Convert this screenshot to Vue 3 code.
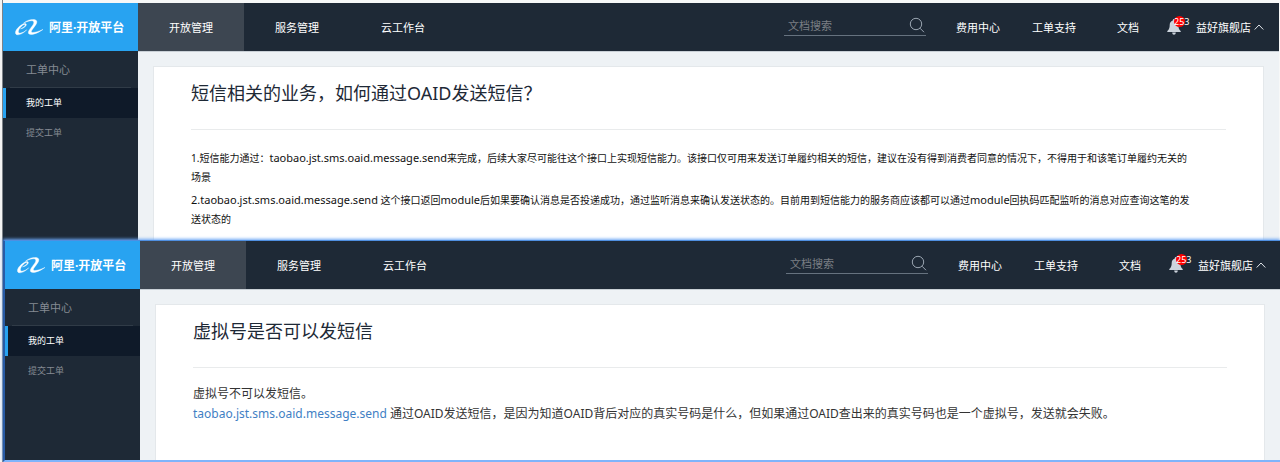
<script setup>
import { ref } from 'vue'

const tabs = ['开放管理', '服务管理', '云工作台']
const links = ['费用中心', '工单支持', '文档']
const menu = ['我的工单', '提交工单']
const queries = ref(['', ''])

const panes = [
  {
    id: 'back',
    title: '短信相关的业务，如何通过OAID发送短信？',
    kind: 'compact',
    paragraphs: [
      [
        { text: '1.短信能力通过：' },
        { text: 'taobao.jst.sms.oaid.message.send', type: 'api' },
        { text: '来完成，后续大家尽可能往这个接口上实现短信能力。该接口仅可用来发送订单履约相关的短信，建议在没有得到消费者同意的情况下，不得用于和该笔订单履约无关的' },
        { type: 'break' },
        { text: '场景' },
      ],
      [
        { text: '2.taobao.jst.sms.oaid.message.send', type: 'api' },
        { text: ' 这个接口返回' },
        { text: 'module', type: 'api' },
        { text: '后如果要确认消息是否投递成功，通过监听消息来确认发送状态的。目前用到短信能力的服务商应该都可以通过' },
        { text: 'module', type: 'api' },
        { text: '回执码匹配监听的消息对应查询这笔的发' },
        { type: 'break' },
        { text: '送状态的' },
      ],
    ],
  },
  {
    id: 'front',
    title: '虚拟号是否可以发短信',
    kind: 'regular',
    paragraphs: [
      [{ text: '虚拟号不可以发短信。' }],
      [
        { text: 'taobao.jst.sms.oaid.message.send', type: 'link' },
        { text: ' 通过OAID发送短信，是因为知道OAID背后对应的真实号码是什么，但如果通过OAID查出来的真实号码也是一个虚拟号，发送就会失败。' },
      ],
    ],
  },
]
</script>

<template>
  <div class="desk">
    <section v-for="(pane, index) in panes" :key="pane.id" class="pane" :class="pane.id">
      <header class="top">
        <a class="brand" href="#">
          <svg class="mark" viewBox="0 0 28 17" aria-hidden="true">
            <path d="M5.500 9.800C8.800 9.400 11.600 7 11.300 5.300 10.800 3.600 7.300 4.800 4.500 7.300 1.200 10.200-.6 13.600 1 15.200 3 17 8.600 14.400 11.700 10.800 8.700 13.600 4.600 15 3.600 13.600 2.700 12.200 4.400 8.800 7.700 6.300 9.200 5.200 10.300 5.100 10.300 5.900 10.300 7 7.700 9 5.500 9.800Z" />
            <path d="M8.500 4.200C12.500.6 19.500-.9 21.500 1.700 23.400 4.700 16.600 9.900 16.300 12.700 16.200 14.400 22.500 13.200 28 10.400 22.500 14.700 14 17.200 13.400 14 12.800 10.800 19.400 6 18.800 3 18.200.8 13 1.700 8.500 4.200Z" />
          </svg>
          <span>阿里·开放平台</span>
        </a>
        <nav class="tabs">
          <a v-for="(tab, n) in tabs" :key="tab" href="#" :class="{ on: n === 0 }">{{ tab }}</a>
        </nav>
        <form class="search" @submit.prevent>
          <input v-model="queries[index]" type="text" placeholder="文档搜索" aria-label="文档搜索" />
          <button type="submit" aria-label="搜索">
            <svg viewBox="0 0 16 16" aria-hidden="true">
              <circle cx="7" cy="7" r="5.700" />
              <path d="M11 11.200 15 15.200" />
            </svg>
          </button>
        </form>
        <nav class="links">
          <a v-for="link in links" :key="link" href="#">{{ link }}</a>
        </nav>
        <button class="bell" type="button" aria-label="消息 253">
          <svg viewBox="0 0 14 16" aria-hidden="true">
            <path d="M7 0C6.200 0 5.800.6 5.800 1.400 3.700 2 2.700 3.800 2.700 6 2.700 9 2 10.600.3 12V13H13.700V12C12 10.600 11.300 9 11.300 6 11.300 3.800 10.300 2 8.200 1.400 8.200.6 7.800 0 7 0ZM5.200 13.600C5.300 15 6 15.800 7 15.800S8.700 15 8.800 13.600Z" />
          </svg>
          <span class="count">253</span>
        </button>
        <button class="account" type="button">
          <span>益好旗舰店</span>
          <svg viewBox="0 0 10 6" aria-hidden="true"><path d="M.7 5.500 5 1 9.300 5.500" /></svg>
        </button>
      </header>
      <div class="body">
        <aside class="side">
          <h2>工单中心</h2>
          <a v-for="(item, n) in menu" :key="item" href="#" :class="{ on: n === 0 }">{{ item }}</a>
        </aside>
        <main class="content">
          <article class="card">
            <h1>{{ pane.title }}</h1>
            <div class="text" :class="pane.kind">
              <p v-for="(paragraph, p) in pane.paragraphs" :key="p">
                <template v-for="(part, k) in paragraph" :key="k">
                  <br v-if="part.type === 'break'" />
                  <a v-else-if="part.type === 'link'" href="#">{{ part.text }}</a>
                  <span v-else :class="part.type">{{ part.text }}</span>
                </template>
              </p>
            </div>
          </article>
        </main>
      </div>
    </section>
  </div>
</template>

<style>
body {
  margin: 0;
  background: #f7f8f8;
}
</style>

<style scoped>
.desk {
  display: flex;
  flex-direction: column;
  min-height: 100vh;
  padding: 3px 0 0 3px;
  box-sizing: border-box;
  font-family: "Noto Sans", "Noto Sans CJK SC", sans-serif;
  font-size: 11px;
  background: linear-gradient(to right, #f4f4f4 2px, #7d8288 2px, #7d8288 3px, #f7f8f8 3px);
}
a {
  color: inherit;
  text-decoration: none;
}
button {
  padding: 0;
  border: 0;
  background: none;
  color: inherit;
  font: inherit;
}
svg {
  display: block;
}
.pane {
  display: flex;
  flex-direction: column;
}
.back {
  margin-right: 1px;
}
.front {
  position: relative;
  flex: 1;
  border-left: 2px solid #285ba6;
  border-top: 1px solid #4f8fe0;
  border-bottom: 2px solid #7fb4fb;
  box-shadow: 0 -1px 3px #6aa5f5;
}
.top {
  display: flex;
  align-items: center;
  height: 48px;
  background: #1e2936;
  color: #fff;
  white-space: nowrap;
}
.brand {
  display: flex;
  align-items: center;
  gap: 6px;
  width: 135px;
  height: 100%;
  padding-left: 12px;
  box-sizing: border-box;
  background: #28a3f1;
  font-size: 12px;
  font-weight: 700;
}
.mark {
  width: 28px;
  height: 17px;
  fill: #fff;
  stroke: #fff;
  stroke-width: 0.4;
}
.tabs {
  display: flex;
  height: 100%;
  margin-right: auto;
}
.tabs a {
  display: grid;
  place-items: center;
  width: 106px;
}
.tabs .on {
  background: #3d4651;
}
.search {
  display: flex;
  align-items: center;
  width: 142px;
  height: 20px;
  margin: 0 30px 4px 0;
  border-bottom: 1px solid #66727f;
}
.search input {
  flex: 1;
  min-width: 0;
  padding: 2px 4px 0;
  border: 0;
  outline: 0;
  background: none;
  color: #fff;
  font: inherit;
}
.search input::placeholder {
  color: #7b7f84;
  opacity: 1;
}
.search svg {
  width: 16px;
  height: 16px;
  margin-right: 1px;
  fill: none;
  stroke: #9aa5b1;
}
.links {
  display: flex;
}
.links a {
  margin-right: 32px;
}
.links a:nth-child(2) {
  margin-right: 41px;
}
.links a:last-child {
  margin-right: 28px;
}
.bell {
  position: relative;
  margin-right: 15px;
}
.bell svg {
  width: 14px;
  height: 16px;
  fill: #cdd4dd;
}
.count {
  position: absolute;
  left: 7px;
  top: -3px;
  width: 11px;
  height: 11px;
  border-radius: 50%;
  background: #f00;
  font-size: 9px;
  line-height: 11px;
}
.account {
  display: flex;
  align-items: center;
  gap: 3px;
  margin-right: 15px;
}
.front .account {
  margin-right: 14px;
}
.account svg {
  width: 10px;
  height: 6px;
  fill: none;
  stroke: #dfe3e8;
}
.body {
  display: flex;
  flex: 1;
}
.side {
  width: 135px;
  background: #1e2936;
  color: #858b93;
}
.side h2 {
  height: 36px;
  margin: 0 7px;
  padding-left: 16px;
  border-bottom: 1px solid #303b47;
  font-size: 11px;
  font-weight: 400;
  line-height: 38px;
}
.side a {
  display: block;
  padding-left: 23px;
  font-size: 9px;
  line-height: 30px;
}
.side .on {
  padding-left: 20px;
  border-left: 3px solid #28a3f1;
  background: #0f1a29;
  color: #fff;
}
.content {
  display: flex;
  flex: 1;
  min-width: 0;
  padding: 14px 15px 0;
  border-top: 1px solid #c9d0d6;
  background: #eef2f5;
}
.card {
  flex: 1;
  padding: 0 37px;
  border: 1px solid #e4e8eb;
  border-bottom: 0;
  background: #fff;
}
h1 {
  margin: 0;
  padding-bottom: 9px;
  border-bottom: 1px solid #e9ebec;
  color: #1e2936;
  font-size: 18px;
  font-weight: 400;
  line-height: 53px;
}
p {
  margin: 0;
}
.compact {
  padding: 18px 0 8px;
  color: #111;
  font-size: 10px;
  line-height: 19px;
}
.compact p {
  margin-bottom: 3px;
}
.api {
  font-size: 11px;
}
.regular {
  padding: 16px 0;
  color: #333;
  font-size: 12px;
  line-height: 20px;
}
.regular a {
  color: #3f7fc4;
}
</style>
